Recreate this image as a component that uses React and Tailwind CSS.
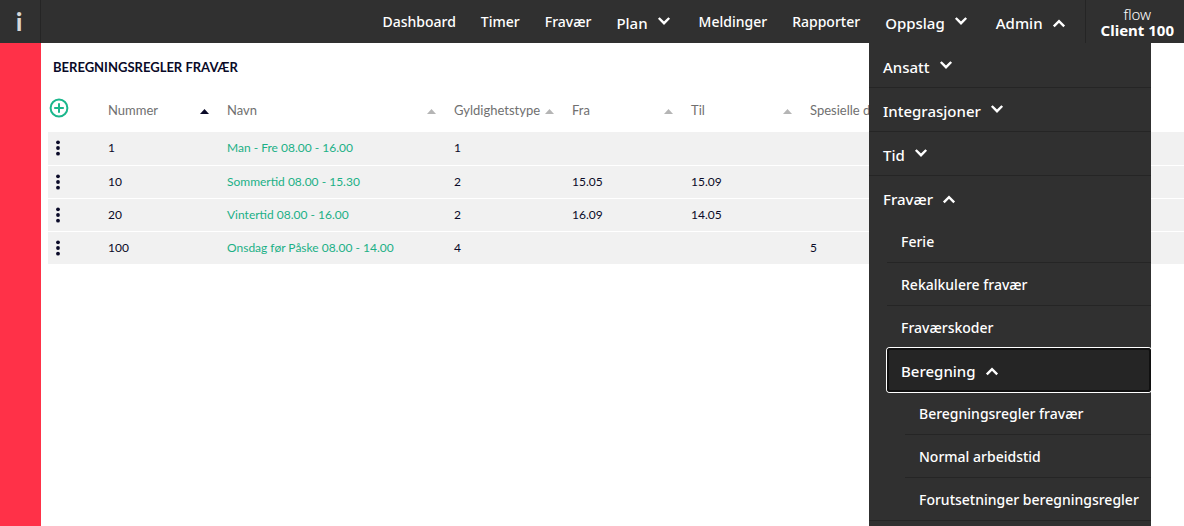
import React from "react";

function Chevron({ up = false }) {
  return (
    <svg viewBox="0 0 16 16" className="h-4 w-4 shrink-0" fill="none" stroke="currentColor" strokeWidth="2.4" aria-hidden="true">
      <path d={up ? "M2.8 11.4 L8 6.2 L13.2 11.4" : "M2.8 3 L8 8.2 L13.2 3"} />
    </svg>
  );
}

function NavLink({ children }) {
  return (
    <a href="#" className="text-[14px] leading-5 font-medium">
      {children}
    </a>
  );
}

function NavToggle({ label, open = false }) {
  return (
    <button type="button" aria-expanded={open} className="flex items-center gap-2 pt-0.5 pr-0.5 text-[15px] leading-5 font-medium">
      {label}
      <Chevron up={open} />
    </button>
  );
}

function MenuToggle({ label, open = false, focused = false }) {
  const state = focused
    ? "rounded-[3px] bg-[#252525] shadow-[inset_0_0_0_2px_#101010,0_0_0_1px_#ffffff]"
    : open
      ? ""
      : "border-b border-[#252525]";
  return (
    <button
      type="button"
      aria-expanded={open}
      className={"flex h-11 w-full items-center gap-2 pt-0.5 pl-3.5 text-left text-[15px] leading-5 font-medium " + state}
    >
      {label}
      <Chevron up={open} />
    </button>
  );
}

function MenuLink({ children, last = false }) {
  return (
    <li className={last ? "" : "border-b border-[#252525]"}>
      <a href="#" className="flex h-[42px] items-center pt-0.5 pl-3.5 text-[14px] leading-5 font-medium">
        {children}
      </a>
    </li>
  );
}

function AdminMenu() {
  return (
    <ul className="absolute top-full right-[33px] z-10 min-h-[calc(100vh-43px)] w-[282px] bg-[#303030] pt-px">
      <li><MenuToggle label="Ansatt" /></li>
      <li><MenuToggle label="Integrasjoner" /></li>
      <li><MenuToggle label="Tid" /></li>
      <li className="border-b border-[#252525]">
        <MenuToggle label="Fravær" open />
        <ul className="pl-[18px]">
          <MenuLink>Ferie</MenuLink>
          <MenuLink>Rekalkulere fravær</MenuLink>
          <MenuLink last>Fraværskoder</MenuLink>
          <li>
            <MenuToggle label="Beregning" open focused />
            <ul className="pl-[18px]">
              <MenuLink>Beregningsregler fravær</MenuLink>
              <MenuLink>Normal arbeidstid</MenuLink>
              <MenuLink last>Forutsetninger beregningsregler</MenuLink>
            </ul>
          </li>
        </ul>
      </li>
    </ul>
  );
}

const columns = [
  { name: "Nummer", width: "w-[119px]", active: true, sortable: true },
  { name: "Navn", width: "w-[227px]", sortable: true },
  { name: "Gyldighetstype", width: "w-[118px]", sortable: true },
  { name: "Fra", width: "w-[119px]", sortable: true },
  { name: "Til", width: "w-[119px]", sortable: true },
  { name: "Spesielle dager", width: "", sortable: false },
];

const rows = [
  ["1", "Man - Fre 08.00 - 16.00", "1", "", "", ""],
  ["10", "Sommertid 08.00 - 15.30", "2", "15.05", "15.09", ""],
  ["20", "Vintertid 08.00 - 16.00", "2", "16.09", "14.05", ""],
  ["100", "Onsdag før Påske 08.00 - 14.00", "4", "", "", "5"],
];

function RulesTable() {
  return (
    <table className="w-full table-fixed border-collapse text-left text-[12px] leading-4 text-[#0a0a28]">
      <thead>
        <tr className="h-12 text-[13px] text-[#707070]">
          <th className="w-[60px] font-normal">
            <button type="button" aria-label="Ny" className="ml-px block text-[#1bb78c]">
              <svg viewBox="0 0 20 20" className="h-5 w-5" fill="none" stroke="currentColor" strokeWidth="2" aria-hidden="true">
                <circle cx="10" cy="10" r="8.4" />
                <path d="M10 5.2V14.8M5.2 10H14.8" />
              </svg>
            </button>
          </th>
          {columns.map((c) => (
            <th key={c.name} className={"pt-1 font-normal " + c.width}>
              <button type="button" className="flex w-full items-center justify-between pr-[18px] whitespace-nowrap">
                {c.name}
                {c.sortable && (
                  <svg viewBox="0 0 9 5" className={"mt-0.5 h-[5px] w-[9px] shrink-0 " + (c.active ? "text-[#0a0a28]" : "text-[#b5b5b5]")} aria-hidden="true">
                    <path d="M0 5L4.5 0L9 5Z" fill="currentColor" />
                  </svg>
                )}
              </button>
            </th>
          ))}
        </tr>
      </thead>
      <tbody>
        {rows.map((r) => (
          <tr key={r[0]} className="h-[33px] border-b border-white bg-[#f1f1f1]">
            <td>
              <button type="button" aria-label="Meny" className="ml-2 block">
                <svg viewBox="0 0 4 16" className="h-4 w-1" fill="currentColor" aria-hidden="true">
                  <circle cx="2" cy="2.3" r="1.9" />
                  <circle cx="2" cy="8" r="1.9" />
                  <circle cx="2" cy="13.7" r="1.9" />
                </svg>
              </button>
            </td>
            {r.map((value, i) => (
              <td key={i} className="whitespace-nowrap">
                {i === 1 ? <a href="#" className="text-[#1bb086]">{value}</a> : value}
              </td>
            ))}
          </tr>
        ))}
      </tbody>
    </table>
  );
}

export default function App() {
  return (
    <div className="flex min-h-screen flex-col bg-white font-['Noto_Sans',sans-serif]">
      <header className="relative flex h-[43px] items-stretch bg-[#303030] text-white">
        <a href="#" aria-label="i" className="flex w-[41px] items-center justify-center border-r border-[#252525] pr-0.5 font-['Lato',sans-serif] text-[24px] leading-6 font-black text-[#d8d8d8]">
          i
        </a>
        <nav className="ml-auto flex items-center gap-[25px] pr-4">
          <NavLink>Dashboard</NavLink>
          <NavLink>Timer</NavLink>
          <NavLink>Fravær</NavLink>
          <NavToggle label="Plan" />
          <NavLink>Meldinger</NavLink>
          <NavLink>Rapporter</NavLink>
          <NavToggle label="Oppslag" />
          <NavToggle label="Admin" open />
        </nav>
        <div className="flex flex-col items-center justify-center border-l border-[#252525] pr-2.5 pl-[15px] text-[15px] leading-4">
          <span className="font-light">flow</span>
          <span className="font-bold">Client 100</span>
        </div>
        <AdminMenu />
      </header>
      <div className="flex flex-1">
        <aside className="w-[41px] shrink-0 bg-[#ff3148]" />
        <main className="min-w-0 flex-1 pl-[7px] font-['Lato',sans-serif]">
          <h1 className="pt-4 pb-[9px] pl-[5px] text-[13px] leading-4 font-bold text-[#0a0a28]">
            BEREGNINGSREGLER FRAVÆR
          </h1>
          <RulesTable />
        </main>
      </div>
    </div>
  );
}
